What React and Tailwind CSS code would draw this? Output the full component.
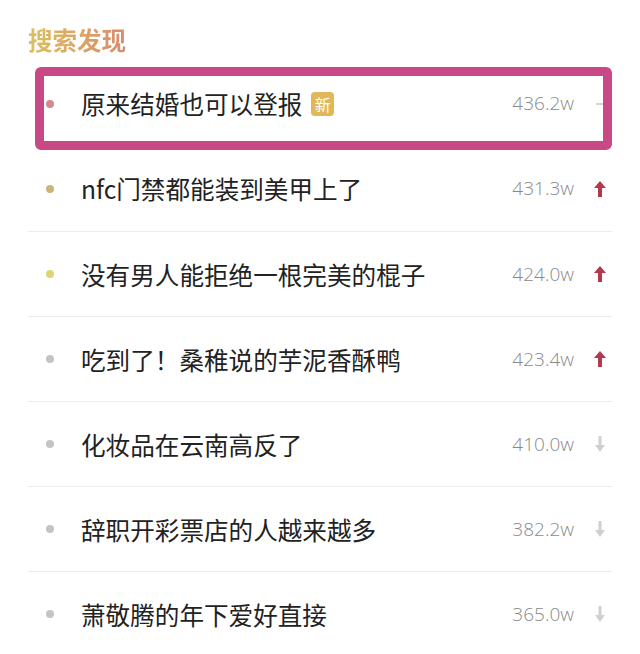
import React from "react";

const rows = [
  { text: "原来结婚也可以登报", num: "436.2w", dot: "bg-[#d4888c]", trend: "flat", isNew: true },
  { text: "nfc门禁都能装到美甲上了", num: "431.3w", dot: "bg-[#cbb47a]", trend: "up" },
  { text: "没有男人能拒绝一根完美的棍子", num: "424.0w", dot: "bg-[#dcd672]", trend: "up" },
  { text: "吃到了！桑稚说的芋泥香酥鸭", num: "423.4w", dot: "bg-[#c4c4c4]", trend: "up" },
  { text: "化妆品在云南高反了", num: "410.0w", dot: "bg-[#c4c4c4]", trend: "down" },
  { text: "辞职开彩票店的人越来越多", num: "382.2w", dot: "bg-[#c4c4c4]", trend: "down" },
  { text: "萧敬腾的年下爱好直接", num: "365.0w", dot: "bg-[#c4c4c4]", trend: "down" },
];

function Trend({ type }) {
  if (type === "up") {
    return (
      <svg width="14" height="18" viewBox="0 0 14 18">
        <path d="M7 1 L13 8 L9 8 L9 17 L5 17 L5 8 L1 8 Z" fill="#b23a4c" />
      </svg>
    );
  }
  if (type === "down") {
    return (
      <svg width="14" height="18" viewBox="0 0 14 18">
        <path d="M5.5 1 L8.5 1 L8.5 10 L12 10 L7 17 L2 10 L5.5 10 Z" fill="#d0d0d0" />
      </svg>
    );
  }
  return (
    <svg width="14" height="18" viewBox="0 0 14 18">
      <rect x="3" y="8" width="7" height="2" fill="#d6d6d6" />
    </svg>
  );
}

function Row({ row, index }) {
  return (
    <div
      className={
        "relative flex items-center h-[85px]" +
        (index > 1 ? " border-t border-[#ececec]" : "")
      }
    >
      <div className={"ml-[18px] w-[8px] h-[8px] rounded-full " + row.dot}></div>
      <div className="ml-[27px] flex items-center flex-1 text-[24.6px] leading-none text-[#222] font-['Noto_Sans_CJK_SC',sans-serif]">
        <span>{row.text}</span>
        {row.isNew && (
          <span className="ml-[9px] w-[23px] h-[24px] rounded-[4px] bg-[#e2b757] text-white text-[16px] flex items-center justify-center">
            新
          </span>
        )}
      </div>
      <div className="text-[19px] text-[#8a8a8a] font-light font-['Open_Sans',sans-serif]">
        {row.num}
      </div>
      <div className="ml-[19px] mr-[5px] flex items-center">
        <Trend type={row.trend} />
      </div>
      {index === 0 && (
        <div className="absolute left-[7px] right-0 top-[6px] bottom-[-4px] border-[9px] border-[#c84985] rounded-[6px]"></div>
      )}
    </div>
  );
}

export default function App() {
  return (
    <div className="w-[640px] h-[654px] bg-white overflow-hidden px-[28px]">
      <div className="h-[61px] pt-[28px]">
        <span className="text-[24.5px] leading-[24px] font-semibold bg-gradient-to-r from-[#dcc060] to-[#d98a6a] bg-clip-text text-transparent font-['Noto_Sans_CJK_SC',sans-serif]">
          搜索发现
        </span>
      </div>
      {rows.map((row, i) => (
        <Row key={i} row={row} index={i} />
      ))}
    </div>
  );
}
